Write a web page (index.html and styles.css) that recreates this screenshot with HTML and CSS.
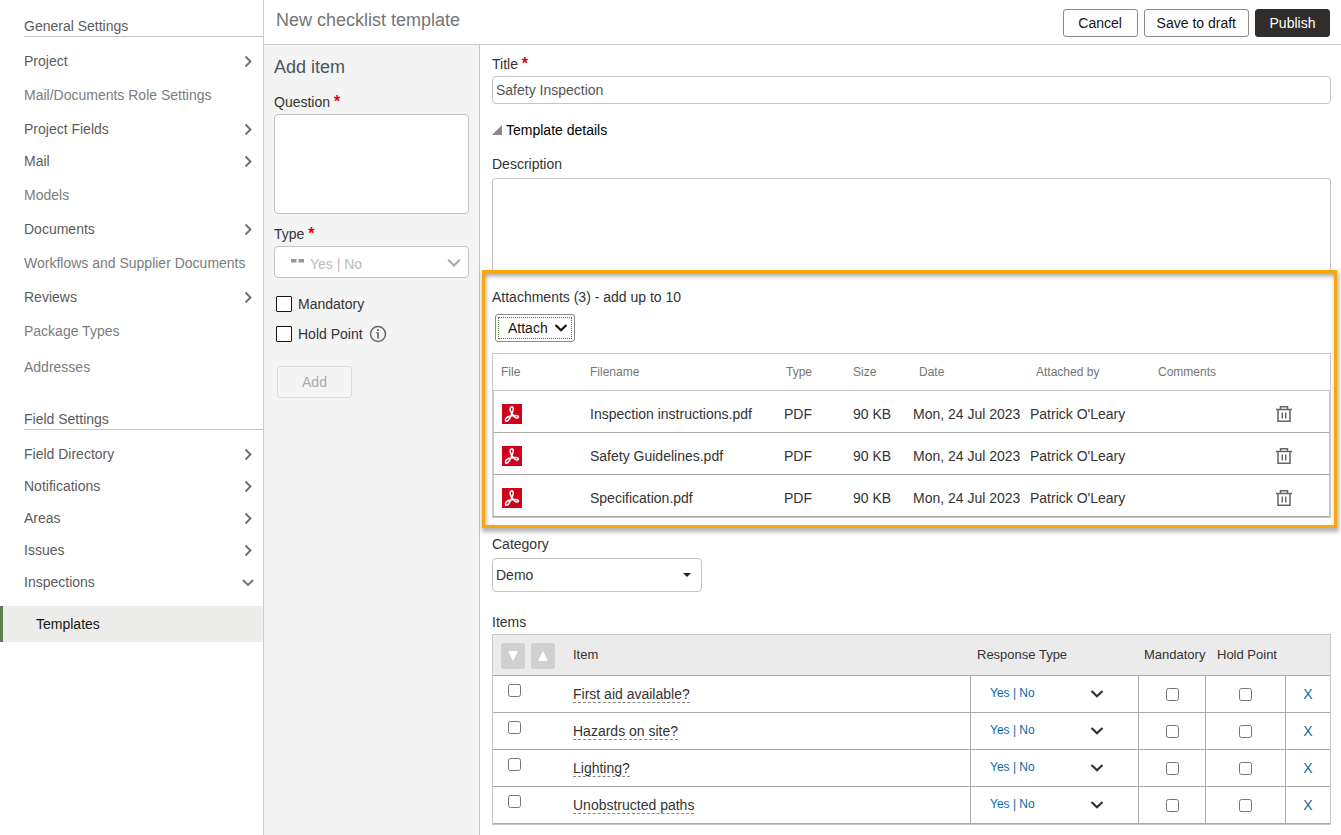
FILE: index.html
```html
<!DOCTYPE html>
<html lang="en">
<head>
  <meta charset="UTF-8">
  <meta name="viewport" content="width=device-width, initial-scale=1">
  <title>New checklist template</title>
  <link rel="stylesheet" href="styles.css">
</head>
<body>
  <!-- Shared icons -->
  <svg class="sprite" aria-hidden="true">
    <symbol id="chevron-right" viewBox="0 0 12 12"><path d="M3.5 1.500 8.5 6.500 3.5 11.500" fill="none" stroke="currentColor" stroke-width="1.900"/></symbol>
    <symbol id="chevron-down" viewBox="0 0 12 12"><path d="M1 4 6 9 11 4" fill="none" stroke="currentColor" stroke-width="1.900"/></symbol>
    <symbol id="chevron-bold" viewBox="0 0 14 14"><path d="M1.5 4 7 9.300 12.500 4" fill="none" stroke="currentColor" stroke-width="2.200"/></symbol>
    <symbol id="pdf" viewBox="0 0 20 20">
      <rect width="20" height="20" fill="#d0021b"/>
      <path d="M9.600 2.900C11.400 2.600 11.500 4.900 10.800 7.200 9.900 10.400 8.400 13.600 6.700 15.800 5.400 17.500 3.400 17.700 3.500 15.900 3.700 13.700 7.500 11.900 11.800 11.500 14.500 11.200 16.600 11.800 16.400 13.200 16.100 14.700 13.700 14.100 12.100 12.400 10.100 10.500 8.700 8.200 8.200 6 7.900 4.400 8.400 3.100 9.600 2.900Z" fill="none" stroke="#fff" stroke-width="1.500" stroke-linejoin="round"/>
    </symbol>
    <symbol id="trash" viewBox="0 0 18 18">
      <path d="M1 4.500H17M5.500 4.500V1.700H12.500V4.500M3 4.500V16.300H15V4.500M7.300 7.500V13.500M10.700 7.500V13.500" fill="none" stroke="currentColor" stroke-width="1.500"/>
    </symbol>
  </svg>

  <div class="page">
    <nav class="sidebar">
      <h2>General Settings</h2>
      <ul>
        <li><a class="group" href="#">Project <svg><use href="#chevron-right"/></svg></a></li>
        <li><a href="#">Mail/Documents Role Settings</a></li>
        <li><a class="group" href="#">Project Fields <svg><use href="#chevron-right"/></svg></a></li>
        <li><a class="group" href="#">Mail <svg><use href="#chevron-right"/></svg></a></li>
        <li><a href="#">Models</a></li>
        <li><a class="group" href="#">Documents <svg><use href="#chevron-right"/></svg></a></li>
        <li><a href="#">Workflows and Supplier Documents</a></li>
        <li><a class="group" href="#">Reviews <svg><use href="#chevron-right"/></svg></a></li>
        <li><a href="#">Package Types</a></li>
        <li><a href="#">Addresses</a></li>
      </ul>
      <h2>Field Settings</h2>
      <ul>
        <li><a class="group" href="#">Field Directory <svg><use href="#chevron-right"/></svg></a></li>
        <li><a class="group" href="#">Notifications <svg><use href="#chevron-right"/></svg></a></li>
        <li><a class="group" href="#">Areas <svg><use href="#chevron-right"/></svg></a></li>
        <li><a class="group" href="#">Issues <svg><use href="#chevron-right"/></svg></a></li>
        <li><a class="group" href="#">Inspections <svg><use href="#chevron-down"/></svg></a></li>
      </ul>
      <a class="current" href="#">Templates</a>
    </nav>

    <div class="main">
      <header class="topbar">
        <h1>New checklist template</h1>
        <div class="actions">
          <button class="btn" type="button">Cancel</button>
          <button class="btn" type="button">Save to draft</button>
          <button class="btn primary" type="button">Publish</button>
        </div>
      </header>

      <div class="columns">
        <form class="add-item">
          <h2>Add item</h2>
          <label class="field-label" for="question">Question <span class="required">*</span></label>
          <textarea id="question" class="question"></textarea>
          <label class="field-label" for="type">Type <span class="required">*</span></label>
          <div class="select type-select">
            <svg class="dashes" viewBox="0 0 13 4"><path d="M0 0H5.500V3.500H0ZM7.500 0H13V3.500H7.500Z" fill="#999"/></svg>
            <select id="type"><option>Yes | No</option></select>
            <svg class="arrow"><use href="#chevron-down"/></svg>
          </div>
          <div class="check-row">
            <input type="checkbox" id="mandatory" class="box">
            <label for="mandatory">Mandatory</label>
          </div>
          <div class="check-row">
            <input type="checkbox" id="holdpoint" class="box">
            <label for="holdpoint">Hold Point</label>
            <svg class="info" viewBox="0 0 18 18"><circle cx="9" cy="9" r="7.500" fill="none" stroke="#666" stroke-width="1.500"/><path d="M8 4.300H10V6H8ZM7.200 7.300H9.900V13.500H8.200V8.500H7.200Z" fill="#666"/></svg>
          </div>
          <button class="add-btn" type="button" disabled>Add</button>
        </form>

        <main class="content">
          <label class="field-label" for="title">Title <span class="required">*</span></label>
          <input type="text" id="title" class="title-input" value="Safety Inspection">
          <button class="toggle" type="button"><svg viewBox="0 0 10 10"><path d="M10 0V10H0Z" fill="#888"/></svg>Template details</button>
          <label class="field-label" for="description">Description</label>
          <textarea id="description" class="description"></textarea>

          <section class="attachments">
            <h3 class="field-label">Attachments (3) - add up to 10</h3>
            <button class="attach-btn" type="button">Attach <svg><use href="#chevron-bold"/></svg></button>
            <table class="files">
              <colgroup>
                <col class="c-file"><col><col class="c-type"><col class="c-size"><col class="c-date"><col class="c-by"><col class="c-comments"><col class="c-del">
              </colgroup>
              <thead>
                <tr><th>File</th><th>Filename</th><th class="type">Type</th><th>Size</th><th class="in">Date</th><th class="in">Attached by</th><th>Comments</th><th></th></tr>
              </thead>
              <tbody>
                <tr>
                  <td><svg class="pdf"><use href="#pdf"/></svg></td><td>Inspection instructions.pdf</td><td>PDF</td><td>90 KB</td><td>Mon, 24 Jul 2023</td><td>Patrick O'Leary</td><td></td>
                  <td class="del"><button type="button" aria-label="Delete"><svg><use href="#trash"/></svg></button></td>
                </tr>
                <tr>
                  <td><svg class="pdf"><use href="#pdf"/></svg></td><td>Safety Guidelines.pdf</td><td>PDF</td><td>90 KB</td><td>Mon, 24 Jul 2023</td><td>Patrick O'Leary</td><td></td>
                  <td class="del"><button type="button" aria-label="Delete"><svg><use href="#trash"/></svg></button></td>
                </tr>
                <tr>
                  <td><svg class="pdf"><use href="#pdf"/></svg></td><td>Specification.pdf</td><td>PDF</td><td>90 KB</td><td>Mon, 24 Jul 2023</td><td>Patrick O'Leary</td><td></td>
                  <td class="del"><button type="button" aria-label="Delete"><svg><use href="#trash"/></svg></button></td>
                </tr>
              </tbody>
            </table>
          </section>

          <label class="field-label" for="category">Category</label>
          <div class="select category-select">
            <select id="category"><option>Demo</option></select>
            <svg class="arrow" viewBox="0 0 8 4"><path d="M0 0H8L4 4Z" fill="#222"/></svg>
          </div>

          <h3 class="field-label items-label">Items</h3>
          <table class="items">
            <colgroup>
              <col class="c-pick"><col><col class="c-response"><col class="c-mandatory"><col class="c-hold"><col class="c-remove">
            </colgroup>
            <thead>
              <tr>
                <th>
                  <div class="movers">
                    <button type="button" aria-label="Move down"><svg viewBox="0 0 10 10"><path d="M0 0H10L5 10Z" fill="#fff"/></svg></button>
                    <button type="button" aria-label="Move up"><svg viewBox="0 0 10 10"><path d="M5 0 10 10H0Z" fill="#fff"/></svg></button>
                  </div>
                </th>
                <th>Item</th><th class="response">Response Type</th><th class="mandatory">Mandatory</th><th class="hold">Hold Point</th><th></th>
              </tr>
            </thead>
            <tbody>
              <tr>
                <td class="pick"><input type="checkbox" aria-label="Select"></td>
                <td><a class="item" href="#">First aid available?</a></td>
                <td><div class="select response-select"><select aria-label="Response type"><option>Yes | No</option></select><svg class="arrow"><use href="#chevron-bold"/></svg></div></td>
                <td class="mid"><input type="checkbox" aria-label="Mandatory"></td>
                <td class="mid"><input type="checkbox" aria-label="Hold Point"></td>
                <td class="mid"><a class="remove" href="#">X</a></td>
              </tr>
              <tr>
                <td class="pick"><input type="checkbox" aria-label="Select"></td>
                <td><a class="item" href="#">Hazards on site?</a></td>
                <td><div class="select response-select"><select aria-label="Response type"><option>Yes | No</option></select><svg class="arrow"><use href="#chevron-bold"/></svg></div></td>
                <td class="mid"><input type="checkbox" aria-label="Mandatory"></td>
                <td class="mid"><input type="checkbox" aria-label="Hold Point"></td>
                <td class="mid"><a class="remove" href="#">X</a></td>
              </tr>
              <tr>
                <td class="pick"><input type="checkbox" aria-label="Select"></td>
                <td><a class="item" href="#">Lighting?</a></td>
                <td><div class="select response-select"><select aria-label="Response type"><option>Yes | No</option></select><svg class="arrow"><use href="#chevron-bold"/></svg></div></td>
                <td class="mid"><input type="checkbox" aria-label="Mandatory"></td>
                <td class="mid"><input type="checkbox" aria-label="Hold Point"></td>
                <td class="mid"><a class="remove" href="#">X</a></td>
              </tr>
              <tr>
                <td class="pick"><input type="checkbox" aria-label="Select"></td>
                <td><a class="item" href="#">Unobstructed paths</a></td>
                <td><div class="select response-select"><select aria-label="Response type"><option>Yes | No</option></select><svg class="arrow"><use href="#chevron-bold"/></svg></div></td>
                <td class="mid"><input type="checkbox" aria-label="Mandatory"></td>
                <td class="mid"><input type="checkbox" aria-label="Hold Point"></td>
                <td class="mid"><a class="remove" href="#">X</a></td>
              </tr>
            </tbody>
          </table>
        </main>
      </div>
    </div>
  </div>
</body>
</html>
```

FILE: styles.css
```css
* {
  box-sizing: border-box;
}
body {
  margin: 0;
  font-family: "Liberation Sans", Arial, sans-serif;
  font-size: 14px;
  line-height: 20px;
  color: #333;
  background: #fff;
}
h1, h2, h3 {
  margin: 0;
  font-weight: normal;
}
a {
  text-decoration: none;
}
button, input, select, textarea {
  font-family: inherit;
  font-size: 14px;
  margin: 0;
}
svg {
  display: block;
  flex: none;
}
.sprite {
  position: absolute;
  width: 0;
  height: 0;
}
.page {
  display: flex;
  min-height: 100vh;
}

/* Left navigation */
.sidebar {
  width: 264px;
  flex: none;
  padding-top: 16px;
  border-right: 1px solid #ccc;
}
.sidebar h2 {
  margin: 0 0 8px 24px;
  font-size: 14px;
  color: #5c5c5c;
  border-bottom: 1px solid #c4c4c4;
}
.sidebar ul {
  list-style: none;
  margin: 0 0 24px;
  padding: 0 9px 0 24px;
}
.sidebar ul:last-of-type {
  margin-bottom: 8px;
}
.sidebar li a {
  display: flex;
  align-items: center;
  justify-content: space-between;
  height: 36px;
  color: #7c7c7c;
}
.sidebar li a.group {
  height: 32px;
  color: #5c5c5c;
}
.sidebar li svg {
  width: 12px;
  height: 12px;
  color: #707070;
}
.sidebar .current {
  display: block;
  padding: 8px 0 8px 33px;
  border-left: 3px solid #5f7d4f;
  background: #ececeb;
  color: #161513;
}

/* Top bar */
.main {
  flex: 1;
  min-width: 0;
  display: flex;
  flex-direction: column;
}
.topbar {
  display: flex;
  align-items: center;
  justify-content: space-between;
  padding: 8px 11px 6px 12px;
  border-bottom: 1px solid #ccc;
}
.topbar h1 {
  font-size: 18px;
  line-height: 20px;
  padding-bottom: 6px;
  color: #757575;
}
.actions {
  display: flex;
  gap: 6px;
  padding: 1px 0;
}
.btn {
  height: 28px;
  padding: 0 12px;
  min-width: 75px;
  border: 1px solid #8b8b8b;
  border-radius: 3px;
  background: #fff;
  color: #161513;
}
.btn.primary {
  background: #312d2a;
  border-color: #312d2a;
  color: #fff;
}
.columns {
  display: flex;
  flex: 1;
}

/* Shared form parts */
.field-label {
  display: block;
  font-size: 14px;
  line-height: 20px;
  color: #333;
}
.required {
  color: #e00;
  font-size: 16px;
  line-height: 20px;
  font-weight: bold;
  vertical-align: top;
}
textarea {
  display: block;
  width: 100%;
  border: 1px solid #c4c4c4;
  border-radius: 4px;
  background: #fff;
  resize: none;
}
.select {
  position: relative;
}
.select select {
  appearance: none;
  display: block;
  width: 100%;
  border: 1px solid #c4c4c4;
  border-radius: 4px;
  background: #fff;
  color: #333;
}
.select .arrow {
  position: absolute;
  top: 50%;
  transform: translateY(-50%);
  pointer-events: none;
}

/* Add item panel */
.add-item {
  width: 216px;
  flex: none;
  padding: 12px 10px;
  background: #f4f4f4;
  border-right: 1px solid #c4c4c4;
}
.add-item h2 {
  margin-bottom: 15px;
  font-size: 18px;
  line-height: 20px;
  color: #4a5560;
}
.question {
  height: 100px;
  margin: 2px 0 10px;
}
.type-select {
  margin: 2px 0 16px;
}
.type-select select {
  height: 32px;
  padding: 3px 35px 0;
  color: #bbb;
}
.type-select .dashes {
  position: absolute;
  left: 17px;
  top: 13px;
  width: 13px;
  height: 4px;
}
.type-select .arrow {
  right: 8px;
  width: 14px;
  height: 14px;
  color: #aaa;
}
.check-row {
  display: flex;
  align-items: center;
  gap: 6px;
  margin: 0 0 10px 2px;
}
.box {
  appearance: none;
  width: 16px;
  height: 16px;
  border: 1px solid #161513;
  border-radius: 1px;
  background: #fff;
}
.info {
  width: 18px;
  height: 18px;
}
.add-btn {
  display: block;
  width: 75px;
  height: 32px;
  margin: 22px 0 0 3px;
  border: 1px solid #d9dce0;
  border-radius: 3px;
  background: transparent;
  color: #a8abb0;
}

/* Template form */
.content {
  flex: 1;
  min-width: 0;
  padding: 9px 10px 10px 12px;
}
.title-input {
  display: block;
  width: 100%;
  height: 28px;
  margin: 2px 0 16px;
  padding: 0 3px;
  border: 1px solid #c4c4c4;
  border-radius: 4px;
  color: #555;
}
.toggle {
  display: flex;
  align-items: center;
  gap: 4px;
  height: 20px;
  margin-bottom: 14px;
  padding: 0;
  border: 0;
  background: none;
  color: #000;
}
.toggle svg {
  width: 10px;
  height: 10px;
}
.description {
  height: 92px;
  margin-top: 4px;
  border-bottom: 0;
  border-radius: 4px 4px 0 0;
}

/* Highlighted attachments block */
.attachments {
  position: relative;
  margin: 0 -6px 6px -10px;
  padding: 14px 3px 7px 7px;
  border: 3px solid #f9a80c;
  background: #fff;
  box-shadow: 1px 3px 4px 1px rgba(0, 0, 0, 0.3), inset 1px 3px 4px rgba(0, 0, 0, 0.35);
}
.attach-btn {
  display: flex;
  align-items: center;
  gap: 6px;
  height: 28px;
  margin: 7px 0 11px 3px;
  padding: 0 6px 0 12px;
  border: 1px solid #8b8b8b;
  border-radius: 3px;
  background: #fff;
  color: #161513;
  outline: 1px dotted #4c7a34;
  outline-offset: -4px;
}
.attach-btn svg {
  width: 14px;
  height: 14px;
}
table {
  width: 100%;
  table-layout: fixed;
  border-collapse: separate;
  border-spacing: 0;
  border: 1px solid #c8c8c8;
}
th, td {
  padding: 0;
  font-weight: normal;
  text-align: left;
  white-space: nowrap;
}
.c-file { width: 87px; }
.c-type { width: 69px; }
.c-size { width: 60px; }
.c-date { width: 117px; }
.c-by { width: 128px; }
.c-comments { width: 90px; }
.c-del { width: 92px; }
.files th {
  height: 37px;
  padding-left: 10px;
  border-bottom: 1px solid #c8c8c8;
  font-size: 12px;
  color: #757575;
}
.files th.type {
  padding-left: 12px;
}
.files th.in {
  padding-left: 16px;
}
.files td {
  height: 42px;
  padding: 5px 0 0 10px;
  border-bottom: 1px solid #aaa;
}
.files th:first-child, .files td:first-child {
  padding-left: 8px;
}
.files td:first-child {
  border-left: 1px solid #c8c8c8;
}
.files td:last-child {
  border-right: 1px solid #c8c8c8;
}
.pdf {
  width: 20px;
  height: 20px;
}
.files .del {
  padding-left: 0;
}
.del button {
  display: block;
  margin: 0 auto;
  padding: 0;
  border: 0;
  background: none;
  color: #666;
}
.del svg {
  width: 18px;
  height: 18px;
}
.category-select {
  width: 210px;
  margin: 4px 0 20px;
}
.category-select select {
  height: 34px;
  padding: 0 3px;
}
.category-select .arrow {
  right: 11px;
  width: 8px;
  height: 4px;
}

/* Items table */
.items-label {
  margin-bottom: 2px;
}
.c-pick { width: 80px; }
.c-response { width: 168px; }
.c-mandatory { width: 67px; }
.c-hold { width: 80px; }
.c-remove { width: 44px; }
.items th {
  height: 41px;
  background: #ebebeb;
  border-bottom: 1px solid #aaa;
  font-size: 13px;
}
.items th.response {
  padding-left: 6px;
}
.items th.mandatory {
  padding-left: 5px;
}
.items th.hold {
  padding-left: 11px;
}
.movers {
  display: flex;
  gap: 6px;
  padding: 2px 0 0 8px;
}
.movers button {
  display: flex;
  align-items: center;
  justify-content: center;
  width: 24px;
  height: 26px;
  padding: 0;
  border: 0;
  border-radius: 3px;
  background: #d0d0d0;
}
.movers svg {
  width: 10px;
  height: 10px;
}
.items td {
  height: 37px;
  border-bottom: 1px solid #aaa;
  border-right: 1px solid #aaa;
}
.items td:first-child {
  border-right: 0;
}
.items td:last-child {
  border-right: 0;
}
.items .mid {
  text-align: center;
}
.items input {
  display: block;
  width: 13px;
  height: 13px;
  margin: 0 auto;
}
.items .pick {
  padding: 8px 0 0 15px;
  vertical-align: top;
}
.items .pick input {
  margin: 0;
}
.item {
  color: #333;
  border-bottom: 1px dashed #888;
}
.response-select select {
  height: 20px;
  padding: 0 19px 2px;
  border: 0;
  font-size: 12px;
  color: #0a6ba3;
}
.response-select .arrow {
  right: 34px;
  width: 14px;
  height: 14px;
  color: #333;
}
.remove {
  color: #0a6ba3;
}
```
